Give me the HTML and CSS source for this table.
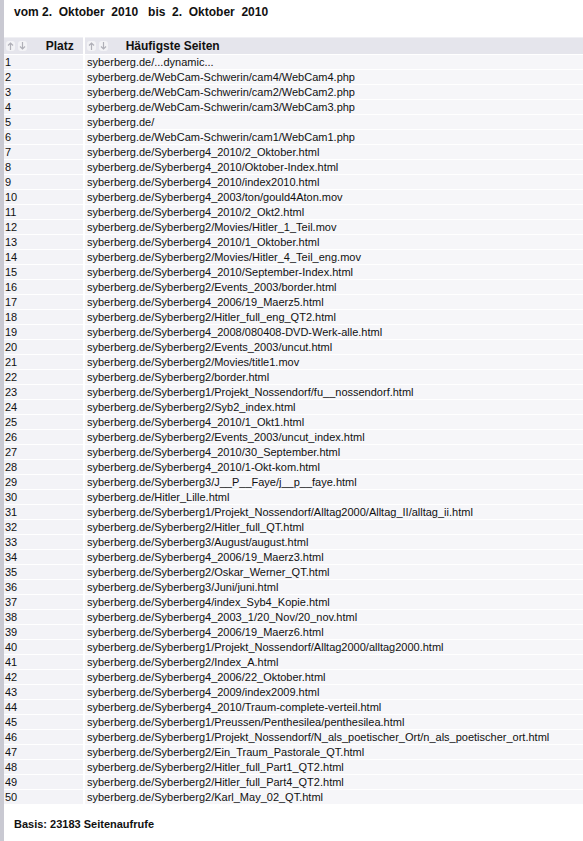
FILE: index.html
```html
<!DOCTYPE html>
<html lang="de">

<head>
    <meta charset="UTF-8">
    <meta name="viewport" content="width=device-width, initial-scale=1.0">
    <title>Häufigste Seiten</title>
    <link rel="stylesheet" href="styles.css">
</head>

<body>
    <div id="page">
        <h1 class="period">vom 2.&nbsp; Oktober&nbsp; 2010 &nbsp; bis&nbsp; 2.&nbsp; Oktober&nbsp; 2010</h1>
        <table class="stats">
            <thead>
                <tr>
                    <th class="col-rank">
                        <span class="sort">
                            <svg width="9" height="10" viewBox="0 0 9 10"><path d="M4.5 2v7M2 4.5L4.5 2L7 4.5" fill="none" stroke="#b0b0b8" stroke-width="1.2"/></svg>
                            <svg width="9" height="10" viewBox="0 0 9 10"><path d="M4.5 8V1M2 5.5L4.5 8L7 5.5" fill="none" stroke="#b0b0b8" stroke-width="1.2"/></svg>
                        </span>
                        Platz
                    </th>
                    <th class="col-page">
                        <span class="sort">
                            <svg width="9" height="10" viewBox="0 0 9 10"><path d="M4.5 2v7M2 4.5L4.5 2L7 4.5" fill="none" stroke="#b0b0b8" stroke-width="1.2"/></svg>
                            <svg width="9" height="10" viewBox="0 0 9 10"><path d="M4.5 8V1M2 5.5L4.5 8L7 5.5" fill="none" stroke="#b0b0b8" stroke-width="1.2"/></svg>
                        </span>
                        Häufigste Seiten
                    </th>
                </tr>
            </thead>
            <tbody>
                <tr><td>1</td><td>syberberg.de/...dynamic...</td></tr>
                <tr><td>2</td><td>syberberg.de/WebCam-Schwerin/cam4/WebCam4.php</td></tr>
                <tr><td>3</td><td>syberberg.de/WebCam-Schwerin/cam2/WebCam2.php</td></tr>
                <tr><td>4</td><td>syberberg.de/WebCam-Schwerin/cam3/WebCam3.php</td></tr>
                <tr><td>5</td><td>syberberg.de/</td></tr>
                <tr><td>6</td><td>syberberg.de/WebCam-Schwerin/cam1/WebCam1.php</td></tr>
                <tr><td>7</td><td>syberberg.de/Syberberg4_2010/2_Oktober.html</td></tr>
                <tr><td>8</td><td>syberberg.de/Syberberg4_2010/Oktober-Index.html</td></tr>
                <tr><td>9</td><td>syberberg.de/Syberberg4_2010/index2010.html</td></tr>
                <tr><td>10</td><td>syberberg.de/Syberberg4_2003/ton/gould4Aton.mov</td></tr>
                <tr><td>11</td><td>syberberg.de/Syberberg4_2010/2_Okt2.html</td></tr>
                <tr><td>12</td><td>syberberg.de/Syberberg2/Movies/Hitler_1_Teil.mov</td></tr>
                <tr><td>13</td><td>syberberg.de/Syberberg4_2010/1_Oktober.html</td></tr>
                <tr><td>14</td><td>syberberg.de/Syberberg2/Movies/Hitler_4_Teil_eng.mov</td></tr>
                <tr><td>15</td><td>syberberg.de/Syberberg4_2010/September-Index.html</td></tr>
                <tr><td>16</td><td>syberberg.de/Syberberg2/Events_2003/border.html</td></tr>
                <tr><td>17</td><td>syberberg.de/Syberberg4_2006/19_Maerz5.html</td></tr>
                <tr><td>18</td><td>syberberg.de/Syberberg2/Hitler_full_eng_QT2.html</td></tr>
                <tr><td>19</td><td>syberberg.de/Syberberg4_2008/080408-DVD-Werk-alle.html</td></tr>
                <tr><td>20</td><td>syberberg.de/Syberberg2/Events_2003/uncut.html</td></tr>
                <tr><td>21</td><td>syberberg.de/Syberberg2/Movies/title1.mov</td></tr>
                <tr><td>22</td><td>syberberg.de/Syberberg2/border.html</td></tr>
                <tr><td>23</td><td>syberberg.de/Syberberg1/Projekt_Nossendorf/fu__nossendorf.html</td></tr>
                <tr><td>24</td><td>syberberg.de/Syberberg2/Syb2_index.html</td></tr>
                <tr><td>25</td><td>syberberg.de/Syberberg4_2010/1_Okt1.html</td></tr>
                <tr><td>26</td><td>syberberg.de/Syberberg2/Events_2003/uncut_index.html</td></tr>
                <tr><td>27</td><td>syberberg.de/Syberberg4_2010/30_September.html</td></tr>
                <tr><td>28</td><td>syberberg.de/Syberberg4_2010/1-Okt-kom.html</td></tr>
                <tr><td>29</td><td>syberberg.de/Syberberg3/J__P__Faye/j__p__faye.html</td></tr>
                <tr><td>30</td><td>syberberg.de/Hitler_Lille.html</td></tr>
                <tr><td>31</td><td>syberberg.de/Syberberg1/Projekt_Nossendorf/Alltag2000/Alltag_II/alltag_ii.html</td></tr>
                <tr><td>32</td><td>syberberg.de/Syberberg2/Hitler_full_QT.html</td></tr>
                <tr><td>33</td><td>syberberg.de/Syberberg3/August/august.html</td></tr>
                <tr><td>34</td><td>syberberg.de/Syberberg4_2006/19_Maerz3.html</td></tr>
                <tr><td>35</td><td>syberberg.de/Syberberg2/Oskar_Werner_QT.html</td></tr>
                <tr><td>36</td><td>syberberg.de/Syberberg3/Juni/juni.html</td></tr>
                <tr><td>37</td><td>syberberg.de/Syberberg4/index_Syb4_Kopie.html</td></tr>
                <tr><td>38</td><td>syberberg.de/Syberberg4_2003_1/20_Nov/20_nov.html</td></tr>
                <tr><td>39</td><td>syberberg.de/Syberberg4_2006/19_Maerz6.html</td></tr>
                <tr><td>40</td><td>syberberg.de/Syberberg1/Projekt_Nossendorf/Alltag2000/alltag2000.html</td></tr>
                <tr><td>41</td><td>syberberg.de/Syberberg2/Index_A.html</td></tr>
                <tr><td>42</td><td>syberberg.de/Syberberg4_2006/22_Oktober.html</td></tr>
                <tr><td>43</td><td>syberberg.de/Syberberg4_2009/index2009.html</td></tr>
                <tr><td>44</td><td>syberberg.de/Syberberg4_2010/Traum-complete-verteil.html</td></tr>
                <tr><td>45</td><td>syberberg.de/Syberberg1/Preussen/Penthesilea/penthesilea.html</td></tr>
                <tr><td>46</td><td>syberberg.de/Syberberg1/Projekt_Nossendorf/N_als_poetischer_Ort/n_als_poetischer_ort.html</td></tr>
                <tr><td>47</td><td>syberberg.de/Syberberg2/Ein_Traum_Pastorale_QT.html</td></tr>
                <tr><td>48</td><td>syberberg.de/Syberberg2/Hitler_full_Part1_QT2.html</td></tr>
                <tr><td>49</td><td>syberberg.de/Syberberg2/Hitler_full_Part4_QT2.html</td></tr>
                <tr><td>50</td><td>syberberg.de/Syberberg2/Karl_May_02_QT.html</td></tr>
            </tbody>
        </table>
        <p class="total">Basis: 23183 Seitenaufrufe</p>
    </div>
</body>

</html>
```

FILE: styles.css
```css
body {
    margin: 0;
    background-color: #ffffff;
    font-family: "Liberation Sans", Arial, sans-serif;
    color: #111111;
}

#page {
    min-height: 841px;
    border-left: 4px solid #c9c9d2;
    box-sizing: border-box;
    padding-top: 5px;
}

.period {
    font-size: 12px;
    font-weight: bold;
    margin: 0 0 0 10px;
    height: 15px;
    line-height: 15px;
    white-space: nowrap;
}

.stats {
    width: 100%;
    margin-top: 17px;
    border-collapse: collapse;
    font-size: 11px;
}

.stats th {
    height: 16px;
    padding: 0;
    background-color: #e5e5ec;
    border-top: 1px solid #f0f0f4;
    border-bottom: 1px solid #ffffff;
    text-align: left;
    font-size: 12px;
    font-weight: bold;
    white-space: nowrap;
}

.stats th.col-rank {
    width: 79px;
    border-right: 2px solid #ffffff;
}

.sort {
    display: inline-block;
    vertical-align: -1px;
    margin: 0 15px 0 2px;
}

.sort svg {
    display: inline-block;
    background-color: #f3f3f6;
    border-radius: 3px;
    margin-right: 0;
}

.col-page .sort {
    margin-left: 2px;
    margin-right: 14px;
}

.stats td {
    height: 14px;
    line-height: 14px;
    padding: 0 0 0 1px;
    background-color: #f6f6f9;
    border-bottom: 1px solid #ffffff;
    white-space: nowrap;
}

.stats td:first-child {
    border-right: 2px solid #ffffff;
    background-color: #f3f3f7;
}

.stats td:last-child {
    padding-left: 2px;
}

.total {
    font-size: 11px;
    font-weight: bold;
    margin: 13px 0 0 10px;
}
```
